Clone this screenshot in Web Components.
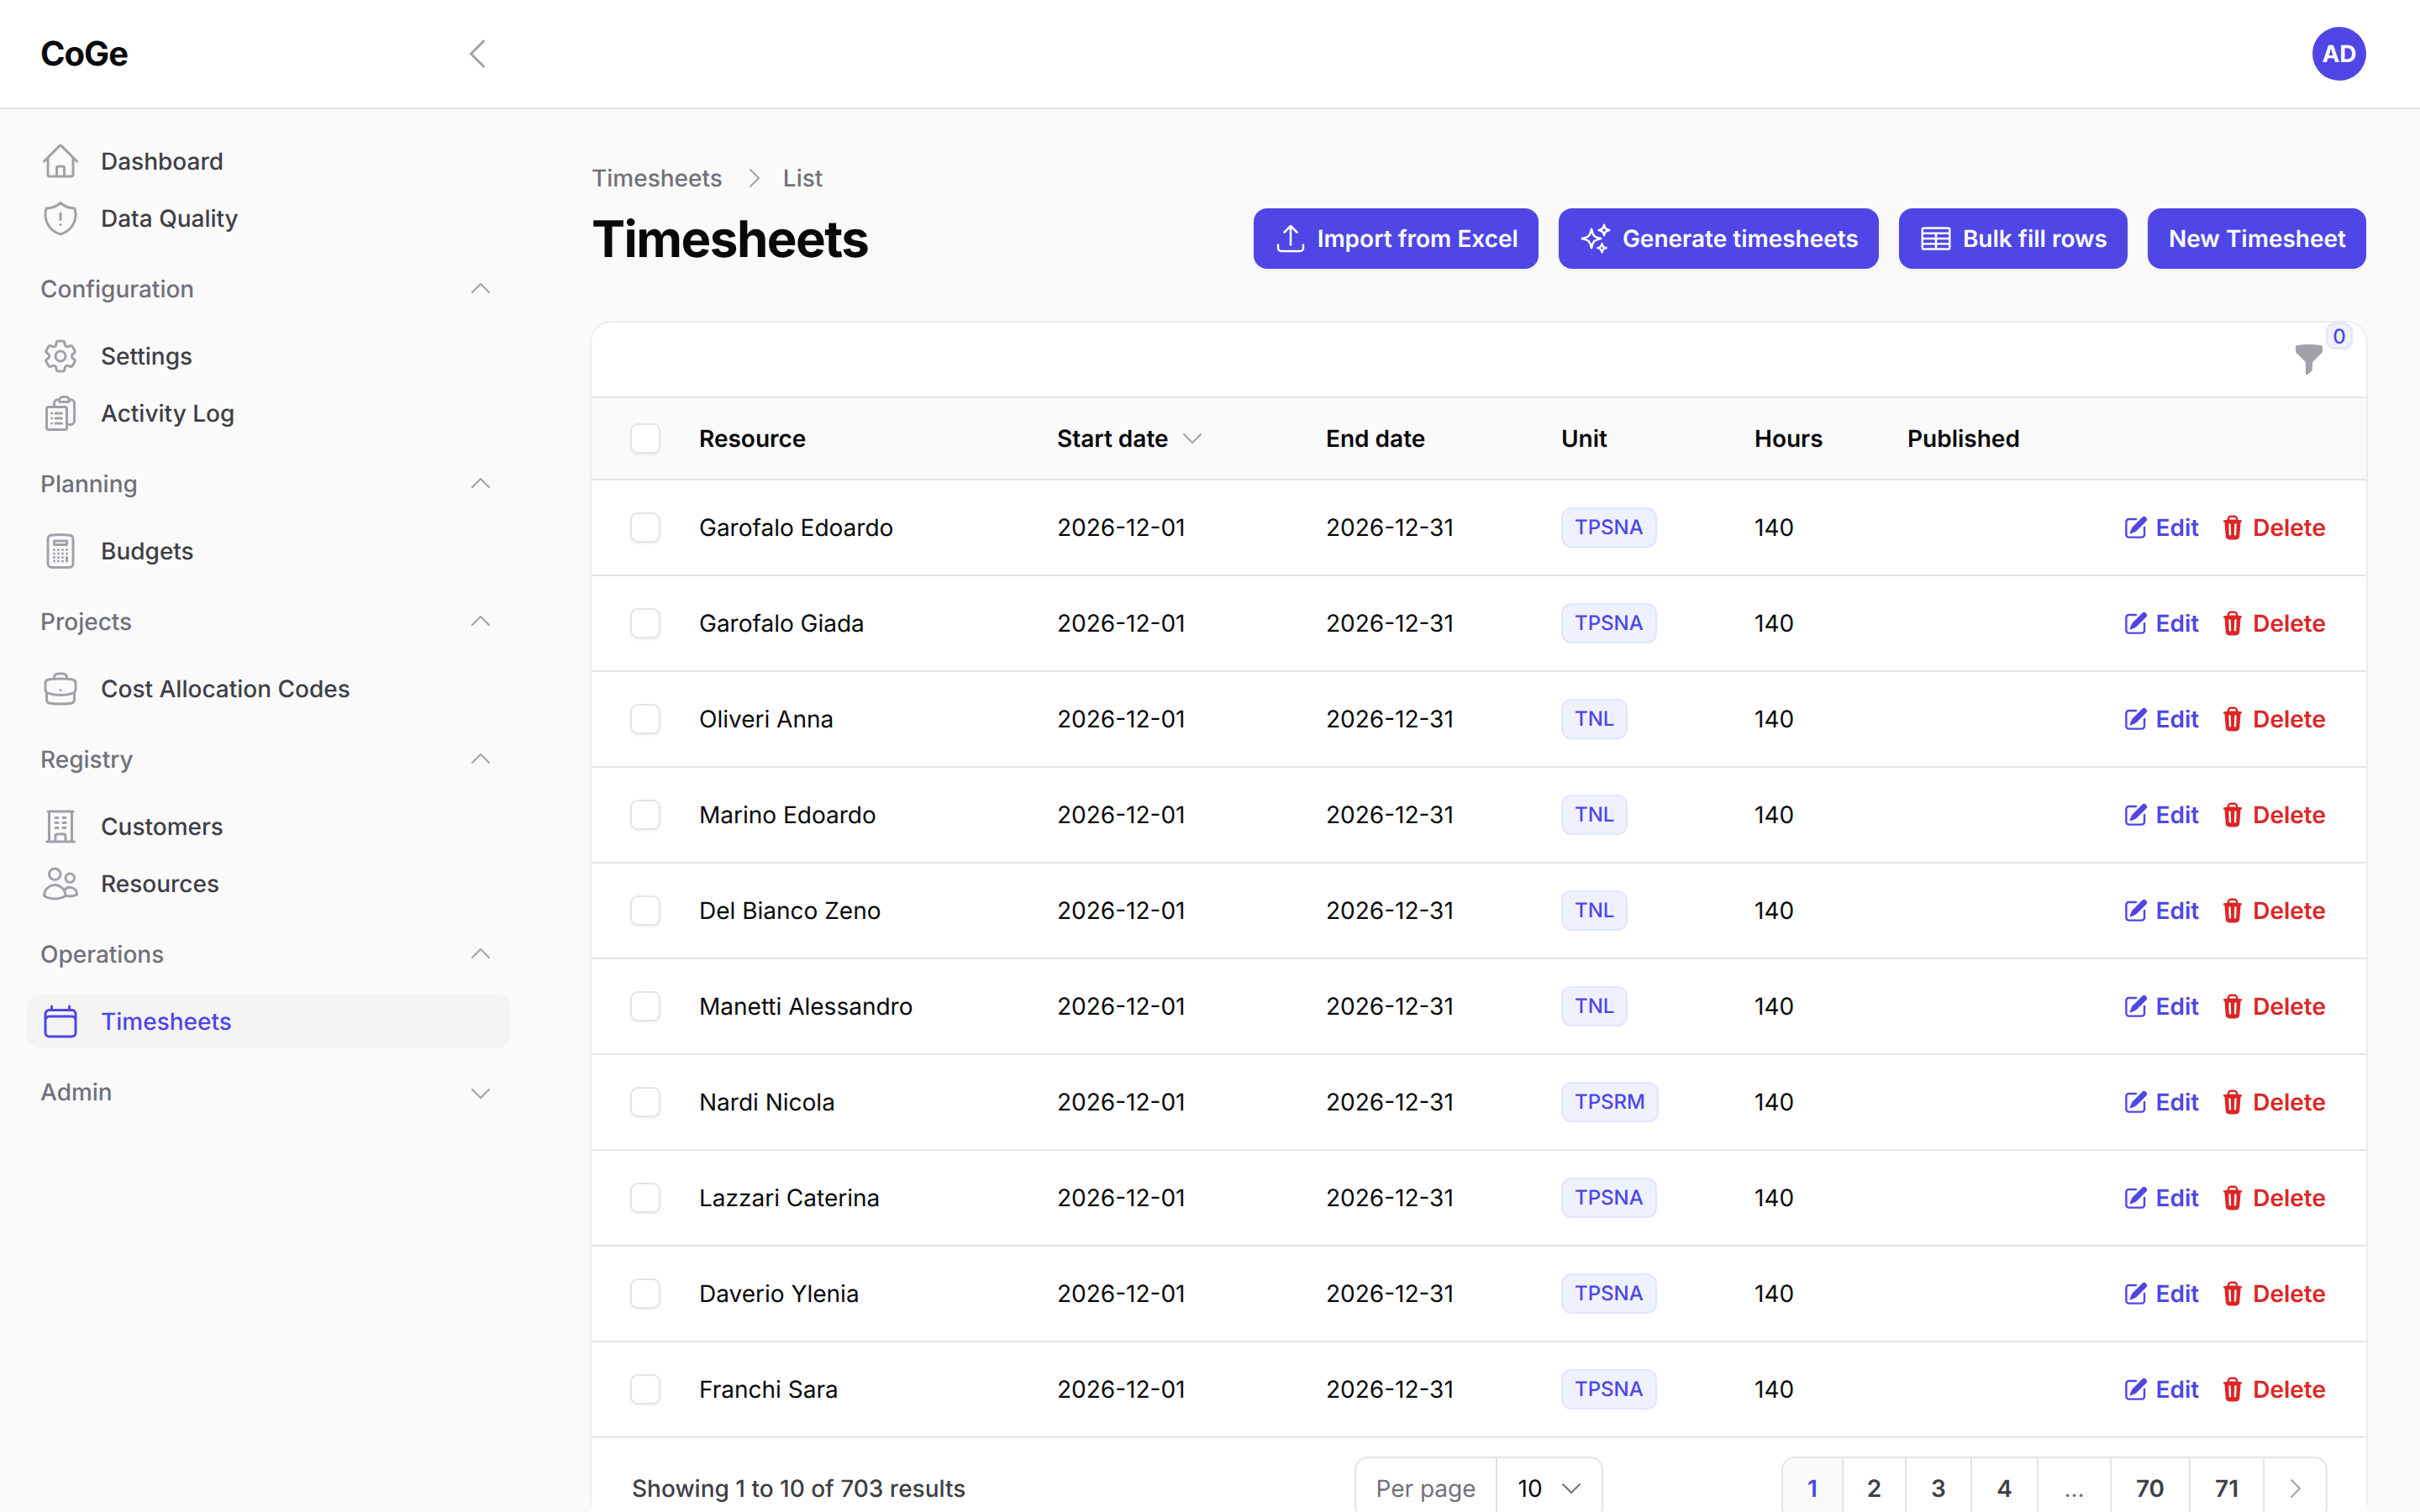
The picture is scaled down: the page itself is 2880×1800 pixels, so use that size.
<!DOCTYPE html>
<html lang="en">
<head>
<meta charset="utf-8">
<title>Timesheets</title>
<style>
  html, body { margin: 0; height: 1800px; overflow: hidden; background: #fafafa; }
  body { font-family: Inter, "Liberation Sans", sans-serif; font-size: 28px; color: #09090b; text-rendering: geometricPrecision; }
  #shell { display: flex; align-items: flex-start; }
</style>
</head>
<body>
<app-topbar brand="CoGe" initials="AD"></app-topbar>
<div id="shell">
  <app-sidebar>
    <nav-item icon="home">Dashboard</nav-item>
    <nav-item icon="shield">Data Quality</nav-item>
    <nav-group label="Configuration">
      <nav-item icon="cog">Settings</nav-item>
      <nav-item icon="clipboard">Activity Log</nav-item>
    </nav-group>
    <nav-group label="Planning">
      <nav-item icon="calculator">Budgets</nav-item>
    </nav-group>
    <nav-group label="Projects">
      <nav-item icon="briefcase">Cost Allocation Codes</nav-item>
    </nav-group>
    <nav-group label="Registry">
      <nav-item icon="building">Customers</nav-item>
      <nav-item icon="users">Resources</nav-item>
    </nav-group>
    <nav-group label="Operations">
      <nav-item icon="calendar" active>Timesheets</nav-item>
    </nav-group>
    <nav-group label="Admin" collapsed></nav-group>
  </app-sidebar>
  <page-main>
    <page-header title="Timesheets">
      <action-button icon="upload">Import from Excel</action-button>
      <action-button icon="sparkles">Generate timesheets</action-button>
      <action-button icon="table">Bulk fill rows</action-button>
      <action-button>New Timesheet</action-button>
    </page-header>
    <ts-table>
      <ts-row name="Garofalo Edoardo" unit="TPSNA"></ts-row>
      <ts-row name="Garofalo Giada" unit="TPSNA"></ts-row>
      <ts-row name="Oliveri Anna" unit="TNL"></ts-row>
      <ts-row name="Marino Edoardo" unit="TNL"></ts-row>
      <ts-row name="Del Bianco Zeno" unit="TNL"></ts-row>
      <ts-row name="Manetti Alessandro" unit="TNL"></ts-row>
      <ts-row name="Nardi Nicola" unit="TPSRM"></ts-row>
      <ts-row name="Lazzari Caterina" unit="TPSNA"></ts-row>
      <ts-row name="Daverio Ylenia" unit="TPSNA"></ts-row>
      <ts-row name="Franchi Sara" unit="TPSNA"></ts-row>
    </ts-table>
  </page-main>
</div>

<script>
const ICONS = {
  home: "M2.25 12l8.954-8.955c.44-.439 1.152-.439 1.591 0L21.75 12M4.5 9.75v10.125c0 .621.504 1.125 1.125 1.125H9.75v-4.875c0-.621.504-1.125 1.125-1.125h2.25c.621 0 1.125.504 1.125 1.125V21h4.125c.621 0 1.125-.504 1.125-1.125V9.75M8.25 21h8.25",
  shield: "M12 9v3.75m0-10.036A11.959 11.959 0 013.598 6 11.99 11.99 0 003 9.75c0 5.592 3.824 10.29 9 11.622 5.176-1.332 9-6.03 9-11.622 0-1.31-.21-2.57-.598-3.75h-.152c-3.196 0-6.1-1.249-8.25-3.286zm0 13.036h.008v.008H12v-.008z",
  cog: "M9.594 3.94c.09-.542.56-.94 1.11-.94h2.593c.55 0 1.02.398 1.11.94l.213 1.281c.063.374.313.686.645.87.074.04.147.083.22.127.324.196.72.257 1.075.124l1.217-.456a1.125 1.125 0 011.37.49l1.296 2.247a1.125 1.125 0 01-.26 1.431l-1.003.827c-.293.24-.438.613-.431.992a6.759 6.759 0 010 .255c-.007.378.138.75.43.99l1.005.828c.424.35.534.954.26 1.43l-1.298 2.247a1.125 1.125 0 01-1.369.491l-1.217-.456c-.355-.133-.75-.072-1.076.124a6.57 6.57 0 01-.22.128c-.331.183-.581.495-.644.869l-.213 1.28c-.09.543-.56.941-1.11.941h-2.594c-.55 0-1.02-.398-1.11-.94l-.213-1.281c-.062-.374-.312-.686-.644-.87a6.52 6.52 0 01-.22-.127c-.325-.196-.72-.257-1.076-.124l-1.217.456a1.125 1.125 0 01-1.369-.49l-1.297-2.247a1.125 1.125 0 01.26-1.431l1.004-.827c.292-.24.437-.613.43-.992a6.932 6.932 0 010-.255c.007-.378-.138-.75-.43-.99l-1.004-.828a1.125 1.125 0 01-.26-1.43l1.297-2.247a1.125 1.125 0 011.37-.491l1.216.456c.356.133.751.072 1.076-.124.072-.044.146-.087.22-.128.332-.183.582-.495.644-.869l.214-1.281zM15 12a3 3 0 11-6 0 3 3 0 016 0z",
  clipboard: "M9 12h3.75M9 15h3.75M9 18h3.75m3 .75H18a2.25 2.25 0 002.25-2.25V6.108c0-1.135-.845-2.098-1.976-2.192a48.424 48.424 0 00-1.123-.08m-5.801 0c-.065.21-.1.433-.1.664 0 .414.336.75.75.75h4.5a.75.75 0 00.75-.75 2.25 2.25 0 00-.1-.664m-5.8 0A2.251 2.251 0 0113.5 2.25H15c1.012 0 1.867.668 2.15 1.586m-5.8 0c-.376.023-.75.05-1.124.08C9.095 4.01 8.25 4.973 8.25 6.108V8.25m0 0H4.875c-.621 0-1.125.504-1.125 1.125v11.25c0 .621.504 1.125 1.125 1.125h9.75c.621 0 1.125-.504 1.125-1.125V9.375c0-.621-.504-1.125-1.125-1.125H8.25zM6.75 12h.008v.008H6.75V12zm0 3h.008v.008H6.75V15zm0 3h.008v.008H6.75V18z",
  calculator: "M15.75 15.75V18m-7.5-6.75h.008v.008H8.25v-.008zm0 2.25h.008v.008H8.25V13.5zm0 2.25h.008v.008H8.25v-.008zm0 2.25h.008v.008H8.25V18zm2.498-6.75h.007v.008h-.007v-.008zm0 2.25h.007v.008h-.007V13.5zm0 2.25h.007v.008h-.007v-.008zm0 2.25h.007v.008h-.007V18zm2.504-6.75h.008v.008h-.008v-.008zm0 2.25h.008v.008h-.008V13.5zm0 2.25h.008v.008h-.008v-.008zm0 2.25h.008v.008h-.008V18zm2.498-6.75h.008v.008h-.008v-.008zm0 2.25h.008v.008h-.008V13.5zM8.25 6h7.5v2.25h-7.5V6zM12 2.25c-1.892 0-3.758.11-5.593.322C5.307 2.7 4.5 3.65 4.5 4.757V19.5a2.25 2.25 0 002.25 2.25h10.5a2.25 2.25 0 002.25-2.25V4.757c0-1.108-.806-2.057-1.907-2.185A48.507 48.507 0 0012 2.25z",
  briefcase: "M20.25 14.15v4.25c0 1.094-.787 2.036-1.872 2.18-2.087.277-4.216.42-6.378.42s-4.291-.143-6.378-.42c-1.085-.144-1.872-1.086-1.872-2.18v-4.25m16.5 0a2.18 2.18 0 00.75-1.661V8.706c0-1.081-.768-2.015-1.837-2.175a48.114 48.114 0 00-3.413-.387m4.5 8.006c-.194.165-.42.295-.673.38A23.978 23.978 0 0112 15.75c-2.648 0-5.195-.429-7.577-1.22a2.016 2.016 0 01-.673-.38m0 0A2.18 2.18 0 013 12.489V8.706c0-1.081.768-2.015 1.837-2.175a48.111 48.111 0 013.413-.387m7.5 0V5.25A2.25 2.25 0 0013.5 3h-3a2.25 2.25 0 00-2.25 2.25v.894m7.5 0a48.667 48.667 0 00-7.5 0M12 12.75h.008v.008H12v-.008z",
  building: "M3.75 21h16.5M4.5 3h15M5.25 3v18m13.5-18v18M9 6.75h1.5m-1.5 3h1.5m-1.5 3h1.5m3-6H15m-1.5 3H15m-1.5 3H15M9 21v-3.375c0-.621.504-1.125 1.125-1.125h3.75c.621 0 1.125.504 1.125 1.125V21",
  users: "M15 19.128a9.38 9.38 0 002.625.372 9.337 9.337 0 004.121-.952 4.125 4.125 0 00-7.533-2.493M15 19.128v-.003c0-1.113-.285-2.16-.786-3.07M15 19.128v.106A12.318 12.318 0 018.624 21c-2.331 0-4.512-.645-6.374-1.766l-.001-.109a6.375 6.375 0 0111.964-3.07M12 6.375a3.375 3.375 0 11-6.75 0 3.375 3.375 0 016.75 0zm8.25 2.25a2.625 2.625 0 11-5.25 0 2.625 2.625 0 015.25 0z",
  calendar: "M6.75 3v2.25M17.25 3v2.25M3 18.75V7.5a2.25 2.25 0 012.25-2.25h13.5A2.25 2.25 0 0121 7.5v11.25m-18 0A2.25 2.25 0 005.25 21h13.5A2.25 2.25 0 0021 18.75m-18 0v-7.5A2.25 2.25 0 015.25 9h13.5A2.25 2.25 0 0121 11.25v7.5",
  upload: "M3 16.5v2.25A2.25 2.25 0 005.25 21h13.5A2.25 2.25 0 0021 18.75V16.5m-13.5-9L12 3m0 0l4.5 4.5M12 3v13.5",
  sparkles: "M9.813 15.904L9 18.75l-.813-2.846a4.5 4.5 0 00-3.09-3.09L2.25 12l2.846-.813a4.5 4.5 0 003.09-3.09L9 5.25l.813 2.846a4.5 4.5 0 003.09 3.09L15.75 12l-2.846.813a4.5 4.5 0 00-3.09 3.09zM18.259 8.715L18 9.75l-.259-1.035a3.375 3.375 0 00-2.455-2.456L14.25 6l1.036-.259a3.375 3.375 0 002.455-2.456L18 2.25l.259 1.035a3.375 3.375 0 002.456 2.456L21.75 6l-1.035.259a3.375 3.375 0 00-2.456 2.456zM16.894 20.567L16.5 21.75l-.394-1.183a2.25 2.25 0 00-1.423-1.423L13.5 18.75l1.183-.394a2.25 2.25 0 001.423-1.423l.394-1.183.394 1.183a2.25 2.25 0 001.423 1.423l1.183.394-1.183.394a2.25 2.25 0 00-1.423 1.423z",
  table: "M3.375 19.5h17.25m-17.25 0a1.125 1.125 0 01-1.125-1.125M3.375 19.5h7.5c.621 0 1.125-.504 1.125-1.125m-9.75 0V5.625m0 12.75v-1.5c0-.621.504-1.125 1.125-1.125m18.375 2.625V5.625m0 12.75c0 .621-.504 1.125-1.125 1.125m1.125-1.125v-1.5c0-.621-.504-1.125-1.125-1.125m0 3.75h-7.5A1.125 1.125 0 0112 18.375m9.75-12.75c0-.621-.504-1.125-1.125-1.125H3.375c-.621 0-1.125.504-1.125 1.125m19.5 0v1.5c0 .621-.504 1.125-1.125 1.125M2.25 5.625v1.5c0 .621.504 1.125 1.125 1.125m0 0h17.25m-17.25 0h7.5c.621 0 1.125.504 1.125 1.125M3.375 8.25c-.621 0-1.125.504-1.125 1.125v1.5c0 .621.504 1.125 1.125 1.125m17.25-3.75h-7.5c-.621 0-1.125.504-1.125 1.125m8.625-1.125c.621 0 1.125.504 1.125 1.125v1.5c0 .621-.504 1.125-1.125 1.125m-17.25 0h7.5m-7.5 0c-.621 0-1.125.504-1.125 1.125v1.5c0 .621.504 1.125 1.125 1.125M12 10.875v-1.5m0 1.5c0 .621-.504 1.125-1.125 1.125M12 10.875c0 .621.504 1.125 1.125 1.125m-2.25 0c.621 0 1.125.504 1.125 1.125M13.125 12h7.5m-7.5 0c-.621 0-1.125.504-1.125 1.125M20.625 12c.621 0 1.125.504 1.125 1.125v1.5c0 .621-.504 1.125-1.125 1.125m-17.25 0h7.5M12 14.625v-1.5m0 1.5c0 .621-.504 1.125-1.125 1.125M12 14.625c0 .621.504 1.125 1.125 1.125m-2.25 0c.621 0 1.125.504 1.125 1.125m0 1.5v-1.5m0 0c0-.621.504-1.125 1.125-1.125m0 0h7.5",
  left: "M15.75 19.5L8.25 12l7.5-7.5",
  right: "M8.25 4.5l7.5 7.5-7.5 7.5",
  up: "M4.5 15.75l7.5-7.5 7.5 7.5",
  down: "M19.5 8.25l-7.5 7.5-7.5-7.5",
};

// filled ones, 20px viewBox
const SOLID = {
  funnel: "M2.628 1.601C5.028 1.206 7.49 1 10 1s4.973.206 7.372.601a.75.75 0 01.628.74v2.288a2.25 2.25 0 01-.659 1.59l-4.682 4.683a2.25 2.25 0 00-.659 1.59v3.037c0 .684-.31 1.33-.844 1.757l-1.937 1.55A.75.75 0 018 18.25v-5.757a2.25 2.25 0 00-.659-1.591L2.659 6.22A2.25 2.25 0 012 4.629V2.34a.75.75 0 01.628-.74z",
  edit: "M5.433 13.917l1.262-3.155A4 4 0 017.58 9.42l6.92-6.918a2.121 2.121 0 013 3l-6.92 6.918c-.383.383-.84.685-1.343.886l-3.154 1.262a.5.5 0 01-.65-.65zM3.5 5.75c0-.69.56-1.25 1.25-1.25H10A.75.75 0 0010 3H4.75A2.75 2.75 0 002 5.75v9.5A2.75 2.75 0 004.75 18h9.5A2.75 2.75 0 0017 15.25V10a.75.75 0 00-1.5 0v5.25c0 .69-.56 1.25-1.25 1.25h-9.5c-.69 0-1.25-.56-1.25-1.25v-9.5z",
  trash: "M8.75 1A2.75 2.75 0 006 3.75v.443c-.795.077-1.584.176-2.365.298a.75.75 0 10.23 1.482l.149-.022.841 10.518A2.75 2.75 0 007.596 19h4.807a2.75 2.75 0 002.742-2.53l.841-10.52.149.023a.75.75 0 00.23-1.482A41.03 41.03 0 0014 4.193V3.75A2.75 2.75 0 0011.25 1h-2.5zM10 4c.84 0 1.673.025 2.5.075V3.75c0-.69-.56-1.25-1.25-1.25h-2.5c-.69 0-1.25.56-1.25 1.25v.325C8.327 4.025 9.16 4 10 4zM8.58 7.72a.75.75 0 00-1.5.06l.3 7.5a.75.75 0 101.5-.06l-.3-7.5zm4.34.06a.75.75 0 10-1.5-.06l-.3 7.5a.75.75 0 101.5.06l.3-7.5z",
};

class HeroIcon extends HTMLElement {
  constructor() {
    super();
    this.attachShadow({ mode: "open" });
  }
  connectedCallback() {
    const name = this.getAttribute("name");
    const size = this.getAttribute("size") || 48;
    const svg = SOLID[name]
      ? `<svg viewBox="0 0 20 20" fill="currentColor"><path fill-rule="evenodd" clip-rule="evenodd" d="${SOLID[name]}"/></svg>`
      : `<svg viewBox="0 0 24 24" fill="none" stroke="currentColor" stroke-width="1.5" stroke-linecap="round" stroke-linejoin="round"><path d="${ICONS[name]}"/></svg>`;
    this.shadowRoot.innerHTML = `
      <style>
        :host { display: inline-flex; flex: none; width: ${size}px; height: ${size}px; }
        svg { display: block; width: 100%; height: 100%; }
      </style>${svg}`;
  }
}
customElements.define("hero-icon", HeroIcon);

class AppTopbar extends HTMLElement {
  constructor() {
    super();
    this.attachShadow({ mode: "open" });
  }
  connectedCallback() {
    this.shadowRoot.innerHTML = `
      <style>
        :host {
          display: flex; align-items: center; box-sizing: border-box;
          height: 130px; background: #fff; border-bottom: 2px solid #e4e4e7;
        }
        .brand-area { display: flex; align-items: center; justify-content: space-between; width: 592px; padding-left: 48px; box-sizing: border-box; }
        .brand { font-size: 40px; font-weight: 700; letter-spacing: -1px; line-height: 56px; color: #09090b; }
        hero-icon { color: #a1a1aa; }
        .avatar {
          margin-left: auto; margin-right: 64px; width: 64px; height: 64px; border-radius: 50%;
          background: #4f46e5; color: #fff; font-size: 28px; font-weight: 700;
          display: flex; align-items: center; justify-content: center;
        }
      </style>
      <div class="brand-area">
        <span class="brand">${this.getAttribute("brand")}</span>
        <hero-icon name="left" size="48"></hero-icon>
      </div>
      <div class="avatar">${this.getAttribute("initials")}</div>`;
  }
}
customElements.define("app-topbar", AppTopbar);

class AppSidebar extends HTMLElement {
  constructor() {
    super();
    this.attachShadow({ mode: "open" });
    this.shadowRoot.innerHTML = `
      <style>
        :host {
          display: flex; flex-direction: column; flex: none; box-sizing: border-box;
          width: 640px; padding: 30px 32px 0;
        }
        ::slotted(nav-item:not(:first-child)) { margin-top: 4px; }
      </style>
      <slot></slot>`;
  }
}
customElements.define("app-sidebar", AppSidebar);

class NavGroup extends HTMLElement {
  constructor() {
    super();
    this.attachShadow({ mode: "open" });
  }
  connectedCallback() {
    const collapsed = this.hasAttribute("collapsed");
    this.shadowRoot.innerHTML = `
      <style>
        :host { display: flex; flex-direction: column; gap: 4px; margin-top: 32px; }
        .head {
          display: flex; align-items: center; justify-content: space-between;
          height: 40px; padding-left: 16px; padding-right: 20px; margin-bottom: ${collapsed ? 0 : 24}px;
          font-size: 28px; font-weight: 500; line-height: 40px; color: #71717a;
        }
        hero-icon { color: #a1a1aa; ${collapsed ? "margin-top: 3px;" : "margin-bottom: 3px;"} }
      </style>
      <div class="head"><span>${this.getAttribute("label")}</span><hero-icon name="${collapsed ? "down" : "up"}" size="32"></hero-icon></div>
      <slot></slot>`;
  }
}
customElements.define("nav-group", NavGroup);

class NavItem extends HTMLElement {
  constructor() {
    super();
    this.attachShadow({ mode: "open" });
  }
  connectedCallback() {
    const active = this.hasAttribute("active");
    this.shadowRoot.innerHTML = `
      <style>
        :host {
          display: flex; align-items: center; gap: 24px; box-sizing: border-box;
          height: 64px; padding-left: 16px; border-radius: 16px;
          font-size: 28px; font-weight: 500; line-height: 40px;
          color: ${active ? "#4f46e5" : "#3f3f46"};
          background: ${active ? "#f4f4f5" : "transparent"};
        }
        hero-icon { color: ${active ? "#4f46e5" : "#a1a1aa"}; }
      </style>
      <hero-icon name="${this.getAttribute("icon")}" size="48"></hero-icon>
      <slot></slot>`;
  }
}
customElements.define("nav-item", NavItem);

class PageMain extends HTMLElement {
  constructor() {
    super();
    this.attachShadow({ mode: "open" });
    this.shadowRoot.innerHTML = `
      <style>
        :host { display: block; flex: 1; min-width: 0; padding: 62px 64px 0; }
      </style>
      <slot></slot>`;
  }
}
customElements.define("page-main", PageMain);

class PageHeader extends HTMLElement {
  constructor() {
    super();
    this.attachShadow({ mode: "open" });
  }
  connectedCallback() {
    const title = this.getAttribute("title");
    this.shadowRoot.innerHTML = `
      <style>
        :host { display: block; }
        .crumbs {
          display: flex; align-items: center; height: 40px; margin-bottom: 16px;
          font-size: 28px; font-weight: 500; line-height: 40px; color: #71717a;
        }
        .crumbs hero-icon { color: #a1a1aa; margin: 0 18px 0 22px; }
        .row { display: flex; align-items: center; justify-content: space-between; }
        h1 { margin: 0; font-size: 60px; font-weight: 700; line-height: 72px; letter-spacing: -1.5px; color: #09090b; transform: translateY(1px); }
        .actions { display: flex; gap: 24px; }
      </style>
      <div class="crumbs"><span>${title}</span><hero-icon name="right" size="32"></hero-icon><span>List</span></div>
      <div class="row">
        <h1>${title}</h1>
        <div class="actions"><slot></slot></div>
      </div>`;
  }
}
customElements.define("page-header", PageHeader);

class ActionButton extends HTMLElement {
  constructor() {
    super();
    this.attachShadow({ mode: "open" });
  }
  connectedCallback() {
    const icon = this.getAttribute("icon");
    this.shadowRoot.innerHTML = `
      <style>
        :host {
          display: inline-flex; align-items: center; gap: 12px; box-sizing: border-box;
          height: 72px; padding: 0 24px; border-radius: 16px;
          background: #4f46e5; color: #fff;
          font-size: 28px; font-weight: 600; line-height: 40px;
          box-shadow: 0 2px 4px rgba(0,0,0,.05);
        }
        :host(:last-child) { padding-left: 25px; }
      </style>
      ${icon ? `<hero-icon name="${icon}" size="40"></hero-icon>` : ""}
      <slot></slot>`;
  }
}
customElements.define("action-button", ActionButton);

class TsCheckbox extends HTMLElement {
  constructor() {
    super();
    this.attachShadow({ mode: "open" });
    this.shadowRoot.innerHTML = `
      <style>
        :host {
          display: block; box-sizing: border-box; width: 36px; height: 36px;
          background: #fff; border: 2px solid #e4e4e7; border-radius: 9px;
          box-shadow: 0 2px 3px rgba(0,0,0,.05);
        }
      </style>`;
  }
}
customElements.define("ts-checkbox", TsCheckbox);

class UnitBadge extends HTMLElement {
  constructor() {
    super();
    this.attachShadow({ mode: "open" });
    this.shadowRoot.innerHTML = `
      <style>
        :host {
          display: inline-flex; align-items: center; box-sizing: border-box;
          height: 48px; padding: 0 14px; border-radius: 12px;
          background: #eef2ff; border: 2px solid #e2e5fd; color: #4f46e5;
          font-size: 24px; font-weight: 500; line-height: 32px;
        }
      </style>
      <slot></slot>`;
  }
}
customElements.define("unit-badge", UnitBadge);

const ROW_COLUMNS = "128px 426px 320px 280px 230px 182px 1fr";

class TsRow extends HTMLElement {
  constructor() {
    super();
    this.attachShadow({ mode: "open" });
  }
  connectedCallback() {
    this.shadowRoot.innerHTML = `
      <style>
        :host {
          display: grid; grid-template-columns: ${ROW_COLUMNS}; align-items: center;
          box-sizing: border-box; height: 114px; background: #fff;
          border-bottom: 2px solid #e4e4e7;
          font-size: 28px; line-height: 40px; color: #09090b;
        }
        ts-checkbox { margin-left: 46px; }
        .actions { display: flex; justify-content: flex-end; padding-right: 48px; gap: 24px; font-weight: 600; }
        .link { display: inline-flex; align-items: center; gap: 8px; }
        .edit { color: #4f46e5; }
        .delete { color: #dc2626; }
      </style>
      <ts-checkbox></ts-checkbox>
      <div>${this.getAttribute("name")}</div>
      <div>2026-12-01</div>
      <div>2026-12-31</div>
      <div><unit-badge>${this.getAttribute("unit")}</unit-badge></div>
      <div>140</div>
      <div class="actions">
        <span class="link edit"><hero-icon name="edit" size="32"></hero-icon>Edit</span>
        <span class="link delete"><hero-icon name="trash" size="32"></hero-icon>Delete</span>
      </div>`;
  }
}
customElements.define("ts-row", TsRow);

class TsPagination extends HTMLElement {
  constructor() {
    super();
    this.attachShadow({ mode: "open" });
  }
  connectedCallback() {
    const pages = [["1", 72], ["2", 75], ["3", 78], ["4", 79], ["...", 87], ["70", 94], ["71", 88]];
    this.shadowRoot.innerHTML = `
      <style>
        :host {
          display: grid; grid-template-columns: 1fr auto 1fr; align-items: flex-start;
          box-sizing: border-box; padding: 22px 48px 0; background: #fff;
          font-size: 28px; line-height: 40px;
        }
        .count { color: #3f3f46; font-weight: 500; padding-top: 18px; }
        .select, .pages {
          display: flex; box-sizing: border-box; height: 76px; background: #fff;
          border: 2px solid #e4e4e7; border-radius: 16px; overflow: hidden;
        }
        .select > * { display: flex; align-items: center; }
        .label { padding: 0 23px; color: #71717a; border-right: 2px solid #e4e4e7; }
        .value { padding: 0 20px 0 25px; gap: 18px; color: #09090b; }
        .value hero-icon { color: #71717a; }
        .pages { justify-self: end; margin-right: -2px; font-weight: 600; color: #3f3f46; }
        .pages > * { display: flex; align-items: center; justify-content: center; box-sizing: border-box; border-right: 2px solid #e4e4e7; }
        .pages > *:last-child { border-right: 0; width: 73px; color: #a1a1aa; }
        .current { background: #fafafa; color: #4f46e5; }
        .gap { color: #71717a; font-weight: 400; }
      </style>
      <div class="count">Showing 1 to 10 of 703 results</div>
      <div class="select">
        <div class="label">Per page</div>
        <div class="value">10<hero-icon name="down" size="32"></hero-icon></div>
      </div>
      <div class="pages">
        ${pages.map(([p, w], i) => `<span class="${i === 0 ? "current" : p === "..." ? "gap" : ""}" style="width:${w}px">${p}</span>`).join("")}
        <span><hero-icon name="right" size="32"></hero-icon></span>
      </div>`;
  }
}
customElements.define("ts-pagination", TsPagination);

class TsTable extends HTMLElement {
  constructor() {
    super();
    this.attachShadow({ mode: "open" });
    this.shadowRoot.innerHTML = `
      <style>
        :host {
          display: block; position: relative; box-sizing: border-box; margin-top: 64px;
          background: #fff; border-radius: 24px;
          box-shadow: 0 0 0 2px rgba(9,9,11,.05);
        }
        .toolbar {
          display: flex; justify-content: flex-end; box-sizing: border-box; height: 90px;
          padding: 24px 48px 0 0; border-bottom: 2px solid #e4e4e7;
          border-radius: 24px 24px 0 0; background: #fff;
        }
        .filter { color: #a1a1aa; width: 40px; height: 40px; }
        .count {
          position: absolute; top: 0; right: 16px; box-sizing: border-box;
          width: 32px; height: 32px; border-radius: 11px;
          display: flex; align-items: center; justify-content: center;
          background: #eef2ff; border: 2px solid #e2e5fd; color: #4f46e5;
          font-size: 24px; font-weight: 500;
        }
        .head {
          display: grid; grid-template-columns: ${ROW_COLUMNS}; align-items: center;
          box-sizing: border-box; height: 98px; background: #fafafa;
          border-bottom: 2px solid #e4e4e7;
          font-size: 28px; font-weight: 600; line-height: 40px; color: #09090b;
        }
        .head ts-checkbox { margin-left: 46px; }
        .sort { display: flex; align-items: center; gap: 12px; }
        .sort hero-icon { color: #a1a1aa; }
      </style>
      <div class="toolbar">
        <div class="filter"><hero-icon name="funnel" size="40"></hero-icon></div>
        <div class="count">0</div>
      </div>
      <div class="head">
        <ts-checkbox></ts-checkbox>
        <div>Resource</div>
        <div class="sort">Start date<hero-icon name="down" size="32"></hero-icon></div>
        <div>End date</div>
        <div>Unit</div>
        <div>Hours</div>
        <div>Published</div>
      </div>
      <slot></slot>
      <ts-pagination></ts-pagination>`;
  }
}
customElements.define("ts-table", TsTable);
</script>
</body>
</html>
